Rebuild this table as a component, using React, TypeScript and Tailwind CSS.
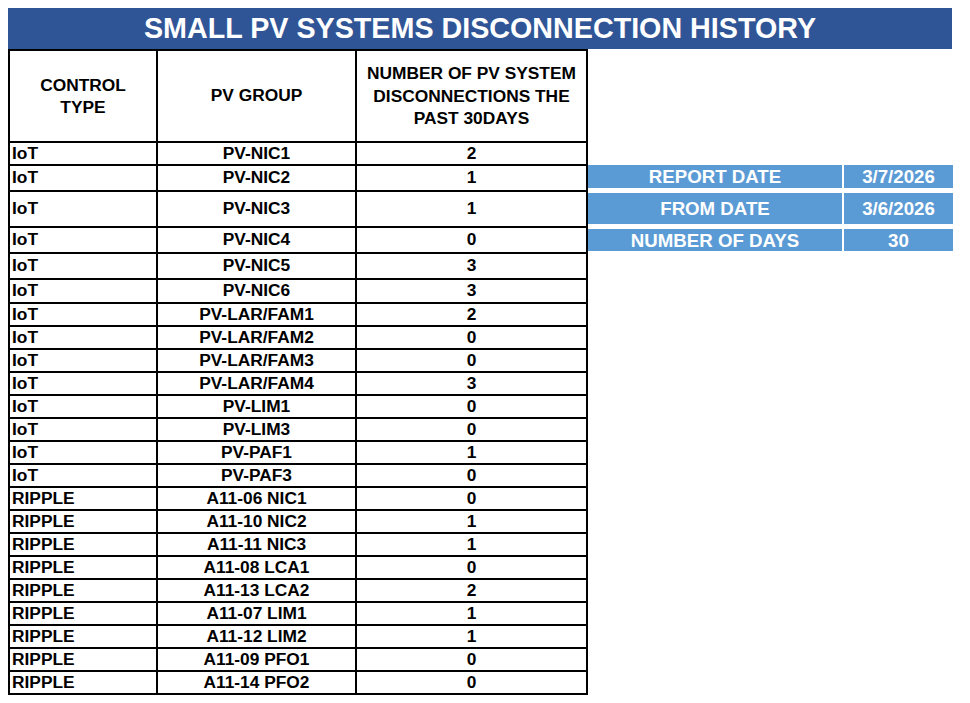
import React from 'react'

type Row = { type: string; group: string; count: number; h: string }

const rows: Row[] = [
  { type: 'IoT', group: 'PV-NIC1', count: 2, h: 'h-[23px]' },
  { type: 'IoT', group: 'PV-NIC2', count: 1, h: 'h-[26px]' },
  { type: 'IoT', group: 'PV-NIC3', count: 1, h: 'h-[36px]' },
  { type: 'IoT', group: 'PV-NIC4', count: 0, h: 'h-[26px]' },
  { type: 'IoT', group: 'PV-NIC5', count: 3, h: 'h-[26px]' },
  { type: 'IoT', group: 'PV-NIC6', count: 3, h: 'h-[24px]' },
  { type: 'IoT', group: 'PV-LAR/FAM1', count: 2, h: 'h-[23px]' },
  { type: 'IoT', group: 'PV-LAR/FAM2', count: 0, h: 'h-[23px]' },
  { type: 'IoT', group: 'PV-LAR/FAM3', count: 0, h: 'h-[23px]' },
  { type: 'IoT', group: 'PV-LAR/FAM4', count: 3, h: 'h-[23px]' },
  { type: 'IoT', group: 'PV-LIM1', count: 0, h: 'h-[23px]' },
  { type: 'IoT', group: 'PV-LIM3', count: 0, h: 'h-[23px]' },
  { type: 'IoT', group: 'PV-PAF1', count: 1, h: 'h-[23px]' },
  { type: 'IoT', group: 'PV-PAF3', count: 0, h: 'h-[23px]' },
  { type: 'RIPPLE', group: 'A11-06 NIC1', count: 0, h: 'h-[23px]' },
  { type: 'RIPPLE', group: 'A11-10 NIC2', count: 1, h: 'h-[23px]' },
  { type: 'RIPPLE', group: 'A11-11 NIC3', count: 1, h: 'h-[23px]' },
  { type: 'RIPPLE', group: 'A11-08 LCA1', count: 0, h: 'h-[23px]' },
  { type: 'RIPPLE', group: 'A11-13 LCA2', count: 2, h: 'h-[23px]' },
  { type: 'RIPPLE', group: 'A11-07 LIM1', count: 1, h: 'h-[23px]' },
  { type: 'RIPPLE', group: 'A11-12 LIM2', count: 1, h: 'h-[23px]' },
  { type: 'RIPPLE', group: 'A11-09 PFO1', count: 0, h: 'h-[23px]' },
  { type: 'RIPPLE', group: 'A11-14 PFO2', count: 0, h: 'h-[23px]' },
]

const info = [
  { label: 'REPORT DATE', value: '3/7/2026', h: 'h-[23px]' },
  { label: 'FROM DATE', value: '3/6/2026', h: 'h-[31px]' },
  { label: 'NUMBER OF DAYS', value: '30', h: 'h-[22px]' },
]

const cell = 'border-r-2 border-b-2 border-black flex items-center'

export default function App() {
  return (
    <div className="min-h-screen bg-white p-2 font-['Liberation_Sans',Arial,sans-serif] font-bold text-black">
      {/* title bar */}
      <div className="flex h-[41px] w-[944px] items-center justify-center bg-[#2f5597] text-[28.7px] leading-none text-white">
        SMALL PV SYSTEMS DISCONNECTION HISTORY
      </div>

      <div className="flex">
        {/* history table */}
        <div className="grid grid-cols-[148px_199px_231px] border-l-2 border-t-2 border-black text-[17.33px] leading-none">
          <div className={`${cell} h-[92px] flex-col justify-center text-center leading-[22px]`}>
            <span>CONTROL</span>
            <span>TYPE</span>
          </div>
          <div className={`${cell} h-[92px] justify-center`}>PV GROUP</div>
          <div className={`${cell} h-[92px] flex-col justify-center text-center leading-[22.5px]`}>
            <span>NUMBER OF PV SYSTEM</span>
            <span>DISCONNECTIONS THE</span>
            <span>PAST 30DAYS</span>
          </div>

          {rows.map((r) => (
            <React.Fragment key={r.group}>
              <div className={`${cell} ${r.h} pl-[2px]`}>{r.type}</div>
              <div className={`${cell} ${r.h} justify-center`}>{r.group}</div>
              <div className={`${cell} ${r.h} justify-center`}>{r.count}</div>
            </React.Fragment>
          ))}
        </div>

        {/* report info */}
        <div className="mt-[116px] flex flex-col gap-[5px] text-[18.67px] leading-none text-white">
          {info.map((i) => (
            <div key={i.label} className={`flex gap-[2px] ${i.h}`}>
              <div className="flex w-[254px] items-center justify-center bg-[#5b9bd5] pt-[2px]">{i.label}</div>
              <div className="flex w-[109px] items-center justify-center bg-[#5b9bd5] pt-[2px]">{i.value}</div>
            </div>
          ))}
        </div>
      </div>
    </div>
  )
}
